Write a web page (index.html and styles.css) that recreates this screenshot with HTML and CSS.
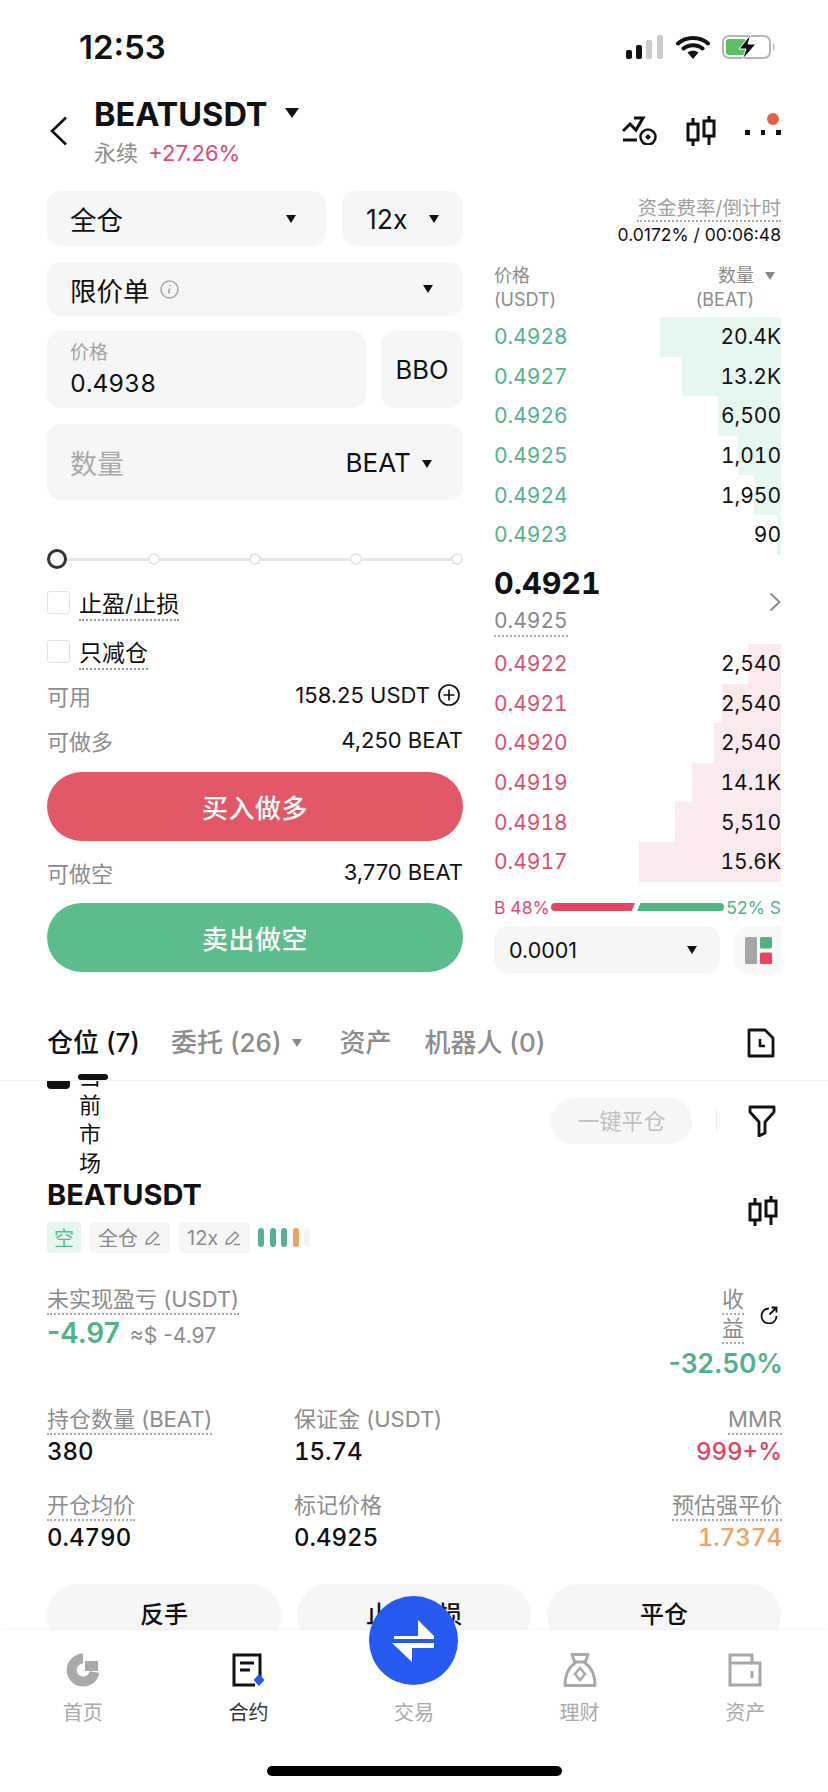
FILE: index.html
```html
<!DOCTYPE html>
<html lang="zh-CN">
<head>
  <meta charset="UTF-8" />
  <meta name="viewport" content="width=device-width, initial-scale=1.0"/>
  <title>BEATUSDT 永续</title>
  <link rel="stylesheet" href="styles.css">
</head>
<body>
<div class="phone">

  <div class="status">
    <span class="time">12:53</span>
    <div class="status-icons">
      <svg width="38" height="24" viewBox="0 0 38 24"><rect x="0" y="15" width="6" height="9" rx="2" fill="#111"/><rect x="10" y="10" width="6" height="14" rx="2" fill="#111"/><rect x="20" y="5" width="6" height="19" rx="2" fill="#ccc"/><rect x="31" y="0" width="6" height="24" rx="2" fill="#ccc"/></svg>
      <svg width="34" height="24" viewBox="0 0 34 24"><path d="M2 8.500C10 1 24 1 32 8.500M7.500 13.500C12.500 9 21.500 9 26.500 13.500" fill="none" stroke="#111" stroke-width="4" stroke-linecap="round"/><path d="M17 24L11.500 17.500C14.500 15 19.500 15 22.500 17.500Z" fill="#111"/></svg>
      <svg width="54" height="26" viewBox="0 0 54 26"><rect x="1" y="2" width="47" height="22" rx="6" fill="none" stroke="#b5b5b5" stroke-width="2"/><rect x="4" y="5" width="20" height="16" rx="3" fill="#5cc063"/><path d="M51 9c2 1 2 7 0 8z" fill="#b5b5b5"/><path d="M29 0L17 15H24L20 26L34 10H26Z" fill="#111" stroke="#fff" stroke-width="1"/></svg>
    </div>
  </div>

  <header class="pair">
    <svg class="back" width="18" height="30" viewBox="0 0 18 30"><path d="M16 1.500L2 15L16 28.500" fill="none" stroke="#111" stroke-width="2.600"/></svg>
    <div class="pair-info">
      <div class="pair-name">BEATUSDT <i class="caret caret-lg"></i></div>
      <div class="pair-sub">永续 <span class="up-pink">+27.26%</span></div>
    </div>
    <div class="pair-tools">
      <svg width="36" height="30" viewBox="0 0 36 30"><path d="M1 16L8 9L14 15L21 3H12" fill="none" stroke="#111" stroke-width="3"/><path d="M1 25H15" stroke="#111" stroke-width="3"/><circle cx="26" cy="22" r="7.500" fill="#fff" stroke="#111" stroke-width="2.500"/><path d="M26 19l3 3-3 3-3-3z" fill="#111"/></svg>
      <svg width="30" height="32" viewBox="0 0 30 32"><use href="#candles"/></svg>
      <div class="more">
        <i></i><i></i><i></i>
        <span class="red-dot"></span>
      </div>
    </div>
  </header>

  <main class="trade">
    <section class="form">
      <div class="line first-line">
        <div class="box select grow"><span>全仓</span><i class="caret"></i></div>
        <div class="box select lever"><span>12x</span><i class="caret"></i></div>
      </div>
      <div class="box select order-type">
        <span class="with-info">限价单
          <svg width="19" height="19" viewBox="0 0 19 19"><circle cx="9.500" cy="9.500" r="8.500" fill="none" stroke="#a5a5a5" stroke-width="1.500"/><path d="M10 5v1.200M9.600 8.300l-.8 5.200" stroke="#a5a5a5" stroke-width="1.700"/></svg>
        </span>
        <i class="caret"></i>
      </div>
      <div class="line price-line">
        <div class="box price grow">
          <label>价格</label>
          <div class="price-val">0.4938</div>
        </div>
        <div class="box bbo">BBO</div>
      </div>
      <div class="box qty">
        <span class="qty-ph">数量</span>
        <span class="qty-unit">BEAT <i class="caret"></i></span>
      </div>

      <div class="slider">
        <span class="knob"></span>
        <span class="stop"></span><span class="stop"></span><span class="stop"></span><span class="stop"></span>
      </div>

      <div class="check"><span class="tick"></span><span class="dotted">止盈/止损</span></div>
      <div class="check"><span class="tick"></span><span class="dotted">只减仓</span></div>

      <div class="kv kv-avail"><span>可用</span><b>158.25 USDT
        <svg width="22" height="22" viewBox="0 0 22 22"><circle cx="11" cy="11" r="10" fill="none" stroke="#111" stroke-width="1.700"/><path d="M5.500 11h11M11 5.500v11" stroke="#111" stroke-width="1.700"/></svg>
      </b></div>
      <div class="kv kv-long"><span>可做多</span><b>4,250 BEAT</b></div>
      <button class="cta cta-buy">买入做多</button>
      <div class="kv kv-short"><span>可做空</span><b>3,770 BEAT</b></div>
      <button class="cta cta-sell">卖出做空</button>
    </section>

    <section class="book">
      <div class="funding">
        <span class="dotted">资金费率/倒计时</span>
        <div class="funding-val">0.0172% / 00:06:48</div>
      </div>
      <div class="book-head">
        <div>价格<br>(USDT)</div>
        <div class="book-head-r"><span>数量 <i class="caret caret-gray"></i></span><br><span class="unit">(BEAT)</span></div>
      </div>
      <div class="rows asks">
        <div class="row"><i style="width:121px"></i><span>0.4928</span><b>20.4K</b></div>
        <div class="row"><i style="width:99px"></i><span>0.4927</span><b>13.2K</b></div>
        <div class="row"><i style="width:63px"></i><span>0.4926</span><b>6,500</b></div>
        <div class="row"><i style="width:43px"></i><span>0.4925</span><b>1,010</b></div>
        <div class="row"><i style="width:27px"></i><span>0.4924</span><b>1,950</b></div>
        <div class="row"><i style="width:4px"></i><span>0.4923</span><b>90</b></div>
      </div>
      <div class="mid">
        <div class="mid-l">
          <div class="last">0.4921</div>
          <span class="dotted mark">0.4925</span>
        </div>
        <svg width="12" height="20" viewBox="0 0 12 20"><path d="M1.500 1.500L10.500 10L1.500 18.500" fill="none" stroke="#888" stroke-width="1.800"/></svg>
      </div>
      <div class="rows bids">
        <div class="row"><i style="width:33px"></i><span>0.4922</span><b>2,540</b></div>
        <div class="row"><i style="width:59px"></i><span>0.4921</span><b>2,540</b></div>
        <div class="row"><i style="width:67px"></i><span>0.4920</span><b>2,540</b></div>
        <div class="row"><i style="width:89px"></i><span>0.4919</span><b>14.1K</b></div>
        <div class="row"><i style="width:106px"></i><span>0.4918</span><b>5,510</b></div>
        <div class="row"><i style="width:142px"></i><span>0.4917</span><b>15.6K</b></div>
      </div>
      <div class="ratio">
        <span class="ratio-b">B 48%</span>
        <i class="bar bar-b"></i><i class="bar bar-s"></i>
        <span class="ratio-s">52% S</span>
      </div>
      <div class="depth">
        <div class="box depth-sel"><span>0.0001</span><i class="caret"></i></div>
        <div class="box depth-view">
          <svg width="28" height="27" viewBox="0 0 28 27"><rect x="0" y="0" width="12" height="27" rx="1.500" fill="#a3a5a6"/><rect x="15" y="0" width="12" height="11.500" rx="1.500" fill="#4fb283"/><rect x="15" y="15.500" width="12" height="11.500" rx="1.500" fill="#e6455f"/></svg>
        </div>
      </div>
    </section>
  </main>

  <div class="tabs">
    <span class="tab on">仓位 (7)</span>
    <span class="tab tab-orders">委托 (26) <i class="caret caret-gray"></i></span>
    <span class="tab tab-assets">资产</span>
    <span class="tab tab-bots">机器人 (0)</span>
    <svg class="tab-doc" width="28" height="30" viewBox="0 0 28 30"><path d="M2 2H18L26 10V28H2Z" fill="none" stroke="#111" stroke-width="2.800" stroke-linejoin="round"/><path d="M13 11V18H18" fill="none" stroke="#111" stroke-width="2.600"/></svg>
    <span class="tab-mark"></span>
  </div>

  <div class="filter-row">
    <span class="cur-box"></span>
    <span class="cur-label">当前市场</span>
    <span class="close-all">一键平仓</span>
    <span class="vline"></span>
    <svg class="filter-icon" width="28" height="32" viewBox="0 0 28 32"><path d="M2 2H26V7L17 17V28L11 31V17L2 7Z" fill="none" stroke="#111" stroke-width="2.800" stroke-linejoin="round"/></svg>
  </div>

  <div class="pos-head">
    <div>
      <div class="pos-name">BEATUSDT</div>
      <div class="tags">
        <span class="tag tag-short">空</span>
        <span class="tag">全仓 <svg width="18" height="18" viewBox="0 0 18 18"><use href="#pencil"/></svg></span>
        <span class="tag">12x <svg width="18" height="18" viewBox="0 0 18 18"><use href="#pencil"/></svg></span>
        <span class="risk"><i></i><i></i><i></i><i class="warn"></i><i class="off"></i></span>
      </div>
    </div>
    <svg class="pos-chart" width="30" height="32" viewBox="0 0 30 32"><use href="#candles"/></svg>
  </div>

  <div class="pnl">
    <div>
      <span class="dotted stat-label">未实现盈亏 (USDT)</span>
      <div class="pnl-val"><b>-4.97</b><span>≈$ -4.97</span></div>
    </div>
    <div class="pnl-r">
      <div class="roe-label">
        <span class="roe-text"><span class="dotted">收</span><span class="dotted">益</span></span>
        <svg width="18" height="18" viewBox="0 0 18 18"><path d="M9 2.500A7.500 7.500 0 1 0 16.500 10" fill="none" stroke="#111" stroke-width="1.800"/><path d="M9.500 8.500L16 2M11.500 1.500H16.500V6.500" fill="none" stroke="#111" stroke-width="1.800"/></svg>
      </div>
      <b>-32.50%</b>
    </div>
  </div>

  <div class="stats">
    <div><div class="stat-head"><span class="dotted stat-label">持仓数量 (BEAT)</span></div><b>380</b></div>
    <div><div class="stat-head"><span class="stat-label">保证金 (USDT)</span></div><b>15.74</b></div>
    <div class="right"><div class="stat-head"><span class="dotted stat-label">MMR</span></div><b class="red">999+%</b></div>
    <div><div class="stat-head"><span class="dotted stat-label">开仓均价</span></div><b>0.4790</b></div>
    <div><div class="stat-head"><span class="stat-label">标记价格</span></div><b>0.4925</b></div>
    <div class="right"><div class="stat-head"><span class="dotted stat-label">预估强平价</span></div><b class="orange">1.7374</b></div>
  </div>

  <div class="actions">
    <span>反手</span><span>止盈止损</span><span>平仓</span>
  </div>

  <nav class="tabbar">
    <div class="tabbar-items">
      <a>
        <svg width="34" height="34" viewBox="0 0 34 34"><path d="M17 5.500A11.500 11.500 0 1 0 28.500 19" fill="none" stroke="#a9a9a9" stroke-width="10"/><rect x="19" y="8" width="13" height="10" fill="#a9a9a9"/></svg>
        首页
      </a>
      <a class="on">
        <svg width="34" height="34" viewBox="0 0 34 34"><path d="M29 24V2H3V32H24" fill="none" stroke="#111" stroke-width="3"/><path d="M9 10H23M9 17H19" stroke="#111" stroke-width="3.200"/><path d="M28 21L33.500 27L28 33L22.500 27Z" fill="#2659f0"/></svg>
        合约
      </a>
      <a>交易</a>
      <a>
        <svg width="34" height="34" viewBox="0 0 34 34"><path d="M9 1.500H25L22 10C28 14 32 20 32 32.500H2C2 20 6 14 12 10Z" fill="none" stroke="#a9a9a9" stroke-width="3" stroke-linejoin="round"/><path d="M10 9H24" stroke="#a9a9a9" stroke-width="3"/><path d="M17 15L22 21L17 27L12 21Z" fill="none" stroke="#a9a9a9" stroke-width="2.500"/></svg>
        理财
      </a>
      <a>
        <svg width="34" height="34" viewBox="0 0 34 34"><path d="M2 2H24V10H32V32H2Z" fill="none" stroke="#a9a9a9" stroke-width="3"/><path d="M2 10H24M24 18V25" stroke="#a9a9a9" stroke-width="3"/></svg>
        资产
      </a>
    </div>
    <button class="swap">
      <svg width="44" height="44" viewBox="0 0 44 44"><path d="M2 17H26V1L42 17V20H2Z" fill="#fff"/><path d="M42 24V29H20V43L0 24Z" fill="#fff"/></svg>
    </button>
    <div class="home-bar"></div>
  </nav>

  <svg class="defs" width="0" height="0">
    <defs>
      <g id="candles" fill="none" stroke="#111" stroke-width="3">
        <path d="M7 3V31"/><rect x="2" y="9" width="10" height="16" fill="#fff"/>
        <path d="M23 1V30"/><rect x="18" y="6" width="10" height="15" fill="#fff"/>
      </g>
      <g id="pencil" fill="none" stroke="#888" stroke-width="1.400">
        <path d="M2 15L3 11L11 3L14.500 6.500L6.500 14.500Z"/><path d="M10 15.500H16"/>
      </g>
    </defs>
  </svg>
</div>
</body>
</html>
```

FILE: styles.css
```css
* {
  box-sizing: border-box;
}

html, body {
  margin: 0;
  background: #fff;
}

body {
  font-family: Inter, "Noto Sans CJK SC", sans-serif;
  color: #111;
}

.phone {
  position: relative;
  width: 828px;
  height: 1792px;
  overflow: hidden;
  background: #fff;
}

.defs {
  position: absolute;
}

.caret {
  display: inline-block;
  width: 0;
  height: 0;
  border-left: 5.5px solid transparent;
  border-right: 5.5px solid transparent;
  border-top: 8px solid #111;
  vertical-align: middle;
}

.caret-lg {
  border-left-width: 7px;
  border-right-width: 7px;
  border-top-width: 10px;
  margin: -8px 0 0 10px;
}

.caret-gray {
  border-top-color: #888;
}

.dotted {
  display: inline-block;
  border-bottom: 2px dotted #aaa;
}

/* status bar */
.status {
  height: 94px;
  display: flex;
  align-items: center;
  justify-content: space-between;
  padding: 0 52px 0 79px;
}

.time {
  font-size: 33px;
  font-weight: 600;
}

.status-icons {
  display: flex;
  align-items: center;
  gap: 12px;
}

/* pair header */
.pair {
  height: 97px;
  display: flex;
  padding: 0 47px 0 50px;
}

.back {
  margin: 22px 26px 0 0;
}

.pair-name {
  font-size: 32.5px;
  font-weight: 700;
  line-height: 42px;
}

.pair-sub {
  font-size: 22px;
  line-height: 34px;
  color: #8c8c8c;
}

.up-pink {
  color: #dc4a6c;
  margin-left: 4px;
}

.pair-tools {
  margin-left: auto;
  display: flex;
  align-items: flex-start;
  padding-top: 21px;
  gap: 28px;
}

.more {
  position: relative;
  display: flex;
  width: 36px;
  gap: 11px;
  padding-top: 15px;
  margin-left: 1px;
}

.more i {
  width: 4.5px;
  height: 4.5px;
  background: #111;
}

.red-dot {
  position: absolute;
  right: 2px;
  top: -2px;
  width: 12px;
  height: 12px;
  border-radius: 50%;
  background: #e8604c;
}

/* trade area */
.trade {
  height: 815px;
  display: flex;
  padding-left: 47px;
}

.form {
  width: 416px;
}

.line {
  display: flex;
}

.first-line {
  gap: 16px;
}

.grow {
  flex: 1;
}

.box {
  background: #f6f6f6;
  border-radius: 14px;
}

.select {
  display: flex;
  align-items: center;
  justify-content: space-between;
  height: 55px;
  font-size: 26.5px;
  padding: 0 30px 0 23px;
}

.lever {
  width: 121px;
  padding: 0 24px 0 24px;
}

.order-type {
  margin-top: 16px;
  height: 54px;
}

.with-info {
  display: flex;
  align-items: center;
  gap: 10px;
}

.price-line {
  margin-top: 15px;
  gap: 15px;
}

.price {
  height: 77px;
  padding: 9px 23px;
}

.price label {
  display: block;
  font-size: 19px;
  line-height: 26px;
  color: #a4a4a4;
}

.price-val {
  font-size: 24.5px;
  line-height: 34px;
  font-variant-numeric: tabular-nums;
}

.bbo {
  width: 82px;
  height: 77px;
  font-size: 25.5px;
  display: flex;
  align-items: center;
  justify-content: center;
}

.qty {
  margin-top: 16px;
  height: 76px;
  display: flex;
  align-items: center;
  justify-content: space-between;
  padding: 0 31px 0 23px;
}

.qty-ph {
  font-size: 27px;
  color: #a9a9a9;
}

.qty-unit {
  font-size: 26px;
}

.qty-unit .caret {
  margin-left: 4px;
}

.slider {
  margin: 49px 0 0;
  height: 20px;
  display: flex;
  align-items: center;
  justify-content: space-between;
  background: linear-gradient(#e6e6e6, #e6e6e6) center / 100% 3px no-repeat;
}

.knob {
  width: 20px;
  height: 20px;
  margin-right: -8px;
  border-radius: 50%;
  border: 3px solid #333;
  background: #fff;
}

.stop {
  width: 12px;
  height: 12px;
  border-radius: 50%;
  border: 2px solid #e6e6e6;
  background: #fff;
}

.check {
  display: flex;
  align-items: flex-start;
  font-size: 23px;
  line-height: 27px;
  height: 49px;
  gap: 9px;
}

.slider + .check {
  margin-top: 22px;
}

.check .dotted {
  padding-bottom: 1px;
  border-bottom-color: #999;
}

.tick {
  width: 23px;
  height: 23px;
  border: 1.5px solid #e2e2e2;
  border-radius: 3px;
}

.kv {
  display: flex;
  align-items: center;
  justify-content: space-between;
  height: 30px;
  font-size: 22px;
  color: #8c8c8c;
}

.kv b {
  display: flex;
  align-items: center;
  gap: 8px;
  font-weight: 400;
  color: #111;
}

.kv-avail {
  margin-top: -9px;
}

.kv-avail b {
  padding-right: 3px;
}

.kv-long {
  margin-top: 15px;
}

.kv-short {
  margin-top: 16px;
}

.cta {
  display: block;
  width: 100%;
  height: 69px;
  border: 0;
  border-radius: 35px;
  color: #fff;
  font-family: inherit;
  font-size: 26px;
  font-weight: 500;
  letter-spacing: 0.5px;
}

.cta-buy {
  margin-top: 17px;
  background: #e35866;
}

.cta-sell {
  margin-top: 16px;
  background: #5dbc8b;
}

/* order book */
.book {
  width: 287px;
  margin-left: 31px;
}

.funding {
  height: 71px;
  text-align: right;
  font-size: 19.5px;
  color: #a0a0a0;
  padding-top: 5px;
}

.funding .dotted {
  line-height: 23px;
}

.funding-val {
  font-size: 17.5px;
  line-height: 26px;
  color: #111;
}

.book-head {
  height: 55px;
  display: flex;
  justify-content: space-between;
  font-size: 18px;
  line-height: 24px;
  color: #8c8c8c;
  padding-top: 2px;
}

.book-head-r {
  text-align: right;
  padding-right: 6px;
}

.book-head-r .unit {
  margin-right: 21px;
}

.book-head-r .caret {
  margin: -2px 0 0 6px;
}

.rows {
  height: 238px;
}

.row {
  position: relative;
  height: 39.6px;
  display: flex;
  align-items: center;
  justify-content: space-between;
  font-size: 21px;
  font-variant-numeric: tabular-nums;
}

.row i {
  position: absolute;
  right: 0;
  top: 0;
  bottom: 0;
}

.row span,
.row b {
  position: relative;
  font-weight: 400;
}

.asks .row i {
  background: #e6f7f0;
}

.asks .row span {
  color: #54b38a;
}

.bids .row i {
  background: #faeaed;
}

.bids .row span {
  color: #d9506f;
}

.mid {
  height: 89px;
  display: flex;
  align-items: flex-start;
  justify-content: space-between;
  padding-top: 10px;
  font-variant-numeric: tabular-nums;
}

.mid svg {
  margin-top: 27px;
}

.last {
  font-size: 30.5px;
  font-weight: 700;
  line-height: 36px;
}

.mark {
  font-size: 21px;
  line-height: 28px;
  margin-top: 6px;
  color: #888;
}

.ratio {
  margin-top: 13px;
  height: 24px;
  display: flex;
  align-items: center;
  font-size: 17.5px;
  white-space: nowrap;
}

.ratio-b {
  color: #d9506f;
  width: 57px;
}

.ratio-s {
  color: #54b38a;
  margin-left: auto;
}

.bar {
  height: 8px;
}

.bar-b {
  width: 84px;
  background: #e6455f;
  border-radius: 4px 0 0 4px;
  clip-path: polygon(0 0, 100% 0, 96% 100%, 0 100%);
}

.bar-s {
  width: 87px;
  margin-left: 2px;
  background: #4fb283;
  border-radius: 0 4px 4px 0;
  clip-path: polygon(4% 0, 100% 0, 100% 100%, 0 100%);
}

.depth {
  margin-top: 7px;
  display: flex;
  justify-content: space-between;
}

.depth-sel {
  width: 226px;
  height: 47px;
  display: flex;
  align-items: center;
  justify-content: space-between;
  font-size: 21.5px;
  padding: 0 23px 0 15px;
}

.depth-view {
  width: 47px;
  height: 47px;
  border-radius: 14px 0 0 14px;
  background: #f8f8f8;
  padding: 11px 0 0 11px;
}

/* position tabs */
.tabs {
  position: relative;
  z-index: 2;
  height: 75px;
  display: flex;
  align-items: center;
  padding: 0 53px 0 47px;
  background: #fff;
  border-bottom: 1px solid #f1f1f1;
  font-size: 26px;
  font-weight: 500;
  color: #8c8c8c;
}

.tab {
  margin-bottom: 6px;
}

.tab.on {
  color: #111;
}

.tab-orders {
  margin-left: 31px;
}

.tab-assets {
  margin-left: 37px;
}

.tab-bots {
  margin-left: 33px;
}

.tab .caret {
  margin: -2px 0 0 4px;
}

.tab-doc {
  margin-left: auto;
}

.tab-mark {
  position: absolute;
  left: 78px;
  bottom: 0;
  width: 30px;
  height: 6px;
  border-radius: 3px;
  background: #111;
}

/* current market row, wrapped label runs under the tabs */
.filter-row {
  margin-top: -19px;
  height: 116px;
  display: flex;
  align-items: flex-start;
  padding: 0 52px 0 47px;
}

.cur-box {
  width: 23px;
  height: 23px;
  margin-top: 4px;
  border-radius: 4px;
  background: #111;
}

.cur-label {
  width: 22px;
  margin-left: 9px;
  font-size: 22px;
  line-height: 29px;
}

.close-all {
  margin: 36px 0 0 auto;
  width: 141px;
  height: 46px;
  border-radius: 23px;
  background: #f6f6f6;
  color: #c0c0c0;
  font-size: 22px;
  line-height: 46px;
  text-align: center;
}

.vline {
  width: 1px;
  height: 23px;
  margin: 48px 31px 0 24px;
  background: #eee;
}

.filter-icon {
  margin-top: 43px;
}

/* position */
.pos-head {
  height: 85px;
  display: flex;
  justify-content: space-between;
  padding: 0 50px 0 47px;
}

.pos-name {
  font-size: 29px;
  font-weight: 700;
  line-height: 34px;
}

.tags {
  display: flex;
  align-items: center;
  gap: 9px;
  margin-top: 10px;
  font-size: 20px;
  color: #8c8c8c;
}

.tag {
  display: flex;
  align-items: center;
  gap: 6px;
  height: 31px;
  padding: 0 8px;
  border-radius: 3px;
  background: #f6f6f6;
}

.tag-short {
  width: 34px;
  justify-content: center;
  padding: 0;
  background: #e6f7ef;
  color: #5bbb8f;
}

.risk {
  display: flex;
  gap: 5.5px;
  margin-left: -1px;
}

.risk i {
  width: 6px;
  height: 19px;
  border-radius: 3px;
  background: #54b38a;
}

.risk .warn {
  background: #f0a060;
}

.risk .off {
  background: #f3f3f3;
}

.pos-chart {
  margin-top: 17px;
}

.pnl {
  height: 142px;
  display: flex;
  justify-content: space-between;
  padding: 23px 45px 0 47px;
}

.stat-label {
  font-size: 22px;
  line-height: 27px;
  color: #8c8c8c;
}

.pnl-val {
  display: flex;
  align-items: baseline;
  gap: 10px;
  margin-top: 1px;
  font-size: 21px;
  color: #8c8c8c;
}

.pnl-val b,
.pnl-r b {
  font-size: 28px;
  font-weight: 600;
  color: #52b287;
}

.pnl-r {
  text-align: right;
}

.pnl-r b {
  display: block;
  font-size: 26.5px;
  line-height: 38px;
}

.roe-label {
  display: flex;
  justify-content: flex-end;
  align-items: center;
  gap: 16px;
  padding-right: 5px;
}

.roe-text {
  display: flex;
  flex-direction: column;
  width: 22px;
  font-size: 22px;
  line-height: 26px;
  color: #8c8c8c;
}

.roe-text .dotted {
  height: 29px;
}

.stats {
  display: grid;
  grid-template-columns: 247px 1fr auto;
  row-gap: 22px;
  padding: 0 46px 0 47px;
}

.stat-head {
  height: 30px;
}

.stats b {
  display: block;
  font-size: 24px;
  font-weight: 500;
  line-height: 34px;
  font-variant-numeric: tabular-nums;
}

.stats .stat-label {
  line-height: 28px;
}

.stats .right {
  text-align: right;
}

.stats .red {
  color: #e0455f;
}

.stats .orange {
  color: #f0a060;
}

.actions {
  position: absolute;
  left: 47px;
  right: 47px;
  top: 1584px;
  display: flex;
  gap: 16px;
}

.actions span {
  flex: 1;
  height: 62px;
  border-radius: 31px;
  background: #f6f6f6;
  font-size: 24px;
  font-weight: 500;
  line-height: 62px;
  text-align: center;
}

/* bottom nav */
.tabbar {
  position: absolute;
  left: 0;
  right: 0;
  bottom: 0;
  height: 162px;
  background: #fff;
  box-shadow: 0 -1px 2px rgba(0,0,0,0.04);
}

.tabbar-items {
  display: flex;
  padding-top: 21px;
  height: 136px;
}

.tabbar-items a {
  flex: 1;
  display: flex;
  flex-direction: column;
  align-items: center;
  justify-content: flex-end;
  gap: 12px;
  height: 76px;
  font-size: 20px;
  line-height: 28px;
  color: #aaa;
}

.tabbar-items a.on {
  color: #333;
}

.swap {
  position: absolute;
  left: 369px;
  top: -34px;
  width: 89px;
  height: 89px;
  border: 0;
  border-radius: 50%;
  background: #2659f0;
  padding: 0;
  display: flex;
  align-items: center;
  justify-content: center;
}

.home-bar {
  width: 295px;
  height: 10px;
  margin-left: 267px;
  border-radius: 5px;
  background: #000;
}
```
